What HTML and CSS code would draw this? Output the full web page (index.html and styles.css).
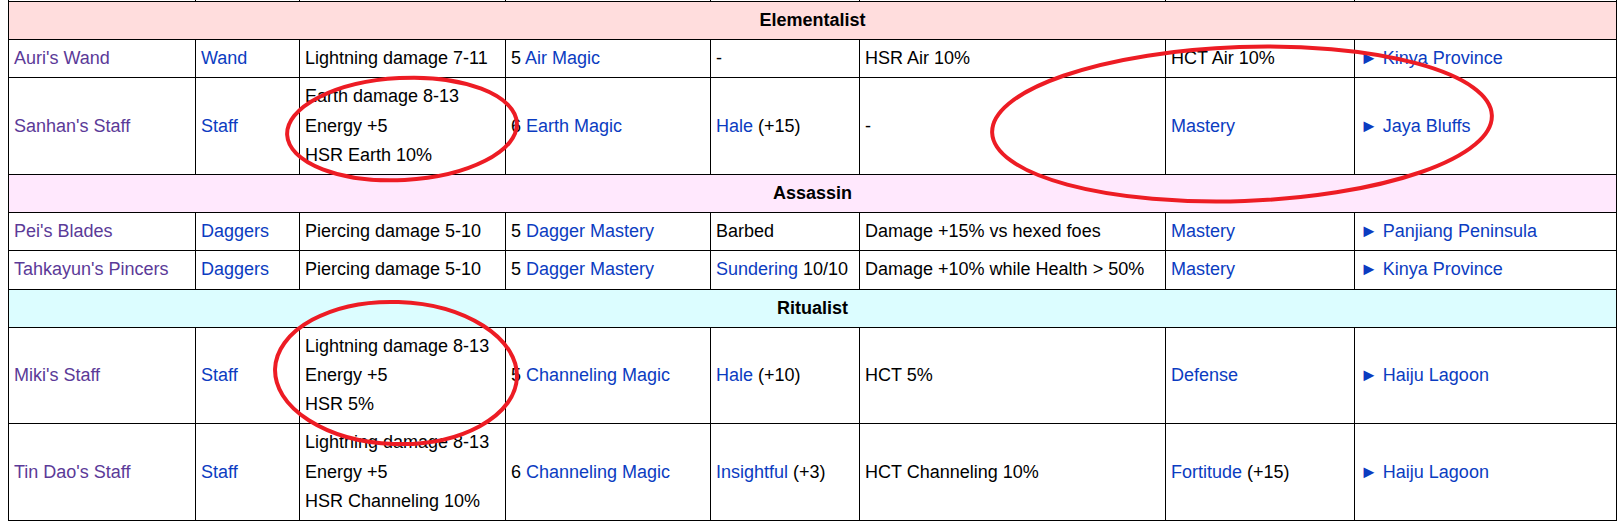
FILE: index.html
```html
<!DOCTYPE html>
<html lang="en">
<head>
  <meta charset="UTF-8" />
  <title>Weapons by profession</title>
  <link rel="stylesheet" href="styles.css">
</head>
<body>
  <div class="page">
    <table class="weapons">
      <colgroup>
        <col class="c-name">
        <col class="c-type">
        <col class="c-damage">
        <col class="c-req">
        <col class="c-prefix">
        <col class="c-inscr">
        <col class="c-suffix">
        <col class="c-where">
      </colgroup>
      <tr class="prev">
        <td></td><td></td><td></td><td></td><td></td><td></td><td></td><td></td>
      </tr>
      <tr class="prof elementalist">
        <th colspan="8">Elementalist</th>
      </tr>
      <tr>
        <td><a class="item" href="#">Auri's Wand</a></td>
        <td><a href="#">Wand</a></td>
        <td>Lightning damage 7-11</td>
        <td>5 <a href="#">Air Magic</a></td>
        <td>-</td>
        <td>HSR Air 10%</td>
        <td>HCT Air 10%</td>
        <td><a href="#">&#9658; Kinya Province</a></td>
      </tr>
      <tr>
        <td><a class="item" href="#">Sanhan's Staff</a></td>
        <td><a href="#">Staff</a></td>
        <td>Earth damage 8-13<br>Energy +5<br>HSR Earth 10%</td>
        <td>6 <a href="#">Earth Magic</a></td>
        <td><a href="#">Hale</a> (+15)</td>
        <td>-</td>
        <td><a href="#">Mastery</a></td>
        <td><a href="#">&#9658; Jaya Bluffs</a></td>
      </tr>
      <tr class="prof assassin">
        <th colspan="8">Assassin</th>
      </tr>
      <tr>
        <td><a class="item" href="#">Pei's Blades</a></td>
        <td><a href="#">Daggers</a></td>
        <td>Piercing damage 5-10</td>
        <td>5 <a href="#">Dagger Mastery</a></td>
        <td>Barbed</td>
        <td>Damage +15% vs hexed foes</td>
        <td><a href="#">Mastery</a></td>
        <td><a href="#">&#9658; Panjiang Peninsula</a></td>
      </tr>
      <tr>
        <td><a class="item" href="#">Tahkayun's Pincers</a></td>
        <td><a href="#">Daggers</a></td>
        <td>Piercing damage 5-10</td>
        <td>5 <a href="#">Dagger Mastery</a></td>
        <td><a href="#">Sundering</a> 10/10</td>
        <td>Damage +10% while Health &gt; 50%</td>
        <td><a href="#">Mastery</a></td>
        <td><a href="#">&#9658; Kinya Province</a></td>
      </tr>
      <tr class="prof ritualist">
        <th colspan="8">Ritualist</th>
      </tr>
      <tr>
        <td><a class="item" href="#">Miki's Staff</a></td>
        <td><a href="#">Staff</a></td>
        <td>Lightning damage 8-13<br>Energy +5<br>HSR 5%</td>
        <td>5 <a href="#">Channeling Magic</a></td>
        <td><a href="#">Hale</a> (+10)</td>
        <td>HCT 5%</td>
        <td><a href="#">Defense</a></td>
        <td><a href="#">&#9658; Haiju Lagoon</a></td>
      </tr>
      <tr>
        <td><a class="item" href="#">Tin Dao's Staff</a></td>
        <td><a href="#">Staff</a></td>
        <td>Lightning damage 8-13<br>Energy +5<br>HSR Channeling 10%</td>
        <td>6 <a href="#">Channeling Magic</a></td>
        <td><a href="#">Insightful</a> (+3)</td>
        <td>HCT Channeling 10%</td>
        <td><a href="#">Fortitude</a> (+15)</td>
        <td><a href="#">&#9658; Haiju Lagoon</a></td>
      </tr>
    </table>

    <!-- red marker circles drawn over the screenshot -->
    <svg class="marks" width="1622" height="527" viewBox="0 0 1622 527">
      <ellipse cx="402" cy="129" rx="115" ry="51" transform="rotate(-3 402 129)" />
      <ellipse cx="1242" cy="124" rx="250" ry="77" transform="rotate(-2 1242 124)" />
      <ellipse cx="396" cy="373" rx="121" ry="71" transform="rotate(2 396 373)" />
    </svg>
  </div>
</body>
</html>
```

FILE: styles.css
```css
body {
  margin: 0;
  background: #ffffff;
  font-family: "Liberation Sans", Arial, sans-serif;
  font-size: 18px;
  color: #000;
}
.page {
  position: relative;
  padding: 0 8px;
  height: 527px;
  overflow: hidden;
}
.weapons {
  border-collapse: collapse;
  table-layout: fixed;
  width: 1608px;
  margin-top: -30px;
  line-height: 29.2px;
}
.weapons td,
.weapons th {
  border: 1px solid #000;
  padding: 4px 5px;
  text-align: left;
  vertical-align: middle;
}
.weapons .prev td {
  height: 22px;
}
.c-name { width: 187px; }
.c-type { width: 104px; }
.c-damage { width: 206px; }
.c-req { width: 205px; }
.c-prefix { width: 149px; }
.c-inscr { width: 306px; }
.c-suffix { width: 189px; }
.c-where { width: 262px; }
.prof th {
  text-align: center;
  font-weight: bold;
}
.elementalist th { background: #ffdddd; }
.assassin th { background: #ffe8fd; }
.ritualist th { background: #dcfdff; }
a {
  color: #0b3cc1;
  text-decoration: none;
}
a.item {
  color: #5b3a98;
}
.marks {
  position: absolute;
  left: 0;
  top: 0;
  pointer-events: none;
}
.marks ellipse {
  fill: none;
  stroke: #ed1c24;
  stroke-width: 4;
}
```
